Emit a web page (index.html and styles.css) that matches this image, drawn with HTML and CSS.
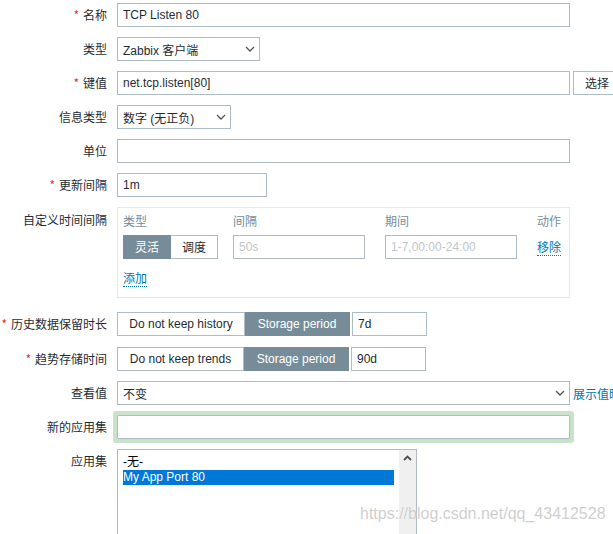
FILE: index.html
```html
<!DOCTYPE html>
<html lang="zh">
<head>
<meta charset="utf-8">
<title>Item</title>
<link rel="stylesheet" href="styles.css">
</head>
<body>
<div class="form">
  <div class="row">
    <div class="lbl"><span class="req">*</span>名称</div>
    <div class="field"><div class="txt w-full">TCP Listen 80</div></div>
  </div>
  <div class="row">
    <div class="lbl">类型</div>
    <div class="field"><div class="sel w-type"><span>Zabbix 客户端</span><svg width="10" height="6" viewBox="0 0 10 6"><polyline points="1,1 5,5 9,1" fill="none" stroke="#555" stroke-width="1.3"/></svg></div></div>
  </div>
  <div class="row">
    <div class="lbl"><span class="req">*</span>键值</div>
    <div class="field"><div class="txt w-full">net.tcp.listen[80]</div><div class="btn">选择</div></div>
  </div>
  <div class="row">
    <div class="lbl">信息类型</div>
    <div class="field"><div class="sel w-info"><span>数字 (无正负)</span><svg width="10" height="6" viewBox="0 0 10 6"><polyline points="1,1 5,5 9,1" fill="none" stroke="#555" stroke-width="1.3"/></svg></div></div>
  </div>
  <div class="row">
    <div class="lbl">单位</div>
    <div class="field"><div class="txt w-full"></div></div>
  </div>
  <div class="row">
    <div class="lbl"><span class="req">*</span>更新间隔</div>
    <div class="field"><div class="txt w-upd">1m</div></div>
  </div>
  <div class="row top row-box">
    <div class="lbl lbl-top">自定义时间间隔</div>
    <div class="field">
      <div class="intervals">
        <div class="hdr">类型</div>
        <div class="hdr">间隔</div>
        <div class="hdr">期间</div>
        <div class="hdr">动作</div>
        <div class="seg seg-small"><span class="on s1">灵活</span><span class="s2">调度</span></div>
        <div class="txt w-int ph">50s</div>
        <div class="txt w-int ph">1-7,00:00-24:00</div>
        <div class="act"><span class="link">移除</span></div>
        <div class="add"><span class="link">添加</span></div>
      </div>
    </div>
  </div>
  <div class="row row-hist">
    <div class="lbl"><span class="req">*</span>历史数据保留时长</div>
    <div class="field">
      <div class="seg"><span class="o1">Do not keep history</span><span class="on o2">Storage period</span></div>
      <div class="txt w-days">7d</div>
    </div>
  </div>
  <div class="row">
    <div class="lbl"><span class="req">*</span>趋势存储时间</div>
    <div class="field">
      <div class="seg"><span class="o1 t">Do not keep trends</span><span class="on o2">Storage period</span></div>
      <div class="txt w-days">90d</div>
    </div>
  </div>
  <div class="row">
    <div class="lbl">查看值</div>
    <div class="field"><div class="sel w-full"><span>不变</span><svg width="10" height="6" viewBox="0 0 10 6"><polyline points="1,1 5,5 9,1" fill="none" stroke="#555" stroke-width="1.3"/></svg></div><span class="link-plain">展示值映射</span></div>
  </div>
  <div class="row">
    <div class="lbl">新的应用集</div>
    <div class="field"><div class="txt w-full focus"></div></div>
  </div>
  <div class="row top">
    <div class="lbl lbl-list">应用集</div>
    <div class="field">
      <div class="listbox">
        <div class="opts">
          <div class="opt">-无-</div>
          <div class="opt sel-opt">My App Port 80</div>
        </div>
        <div class="sbar"><svg width="9" height="6" viewBox="0 0 9 6"><polyline points="1,5 4.5,1.5 8,5" fill="none" stroke="#505050" stroke-width="1.8"/></svg></div>
      </div>
    </div>
  </div>
</div>
<div class="watermark">https://blog.csdn.net/qq_43412528</div>
</body>
</html>
```
FILE: styles.css
```css
html, body {
  margin: 0;
  padding: 0;
  background: #fff;
  width: 613px;
  height: 534px;
  overflow: hidden;
}
body {
  font-family: "Liberation Sans", "Noto Sans CJK SC", sans-serif;
  font-size: 12px;
  color: #1f2c33;
  position: relative;
}
.form {
  padding-top: 3px;
}
.row {
  display: flex;
  align-items: center;
  margin-bottom: 10px;
  white-space: nowrap;
}
.row.top {
  align-items: flex-start;
}
.row-box { margin-bottom: 14px; }
.row-hist { margin-bottom: 11px; }
.lbl {
  width: 107px;
  padding-right: 10px;
  text-align: right;
  flex-shrink: 0;
  font-family: "Noto Sans CJK SC", sans-serif;
  line-height: 16px;
}
.lbl-top { padding-top: 5px; }
.lbl-list { padding-top: 4px; }
.req {
  color: #e0302c;
  margin-right: 4px;
}
.field {
  display: flex;
  align-items: center;
}
.txt {
  box-sizing: border-box;
  height: 24px;
  border: 1px solid #aebcc5;
  background: #fff;
  padding: 0 5px;
  line-height: 22px;
  color: #1f2c33;
}
.w-full { width: 453px; }
.w-upd { width: 150px; }
.w-int { width: 132px; }
.w-days { width: 75px; margin-left: 2px; }
.ph { color: #bfc6ca; }
.focus {
  box-shadow: 0 0 0 4px #c8e4c8;
  border-radius: 1px;
}
.sel {
  box-sizing: border-box;
  height: 24px;
  border: 1px solid #aebcc5;
  padding: 0 4px 0 5px;
  display: flex;
  align-items: center;
  justify-content: space-between;
}
.w-type { width: 143px; }
.w-info { width: 114px; }
.btn {
  box-sizing: border-box;
  height: 24px;
  margin-left: 3px;
  border: 1px solid #aebcc5;
  padding: 0 11px;
  line-height: 22px;
  font-family: "Noto Sans CJK SC", sans-serif;
  flex-shrink: 0;
}
.link-plain {
  color: #0275b8;
  margin-left: 3px;
  font-family: "Noto Sans CJK SC", sans-serif;
}
.intervals {
  box-sizing: border-box;
  width: 453px;
  height: 91px;
  border: 1px solid #e6e9eb;
  padding: 5px 5px 0 5px;
  display: grid;
  grid-template-columns: 110px 152px 152px auto;
  grid-template-rows: 16px 24px auto;
  row-gap: 6px;
  align-items: center;
}
.hdr {
  color: #768d99;
  font-family: "Noto Sans CJK SC", sans-serif;
  line-height: 16px;
}
.act {
  line-height: 16px;
}
.add {
  grid-column: 1 / 5;
  padding-top: 5px;
  align-self: start;
}
.link {
  color: #0275b8;
  font-family: "Noto Sans CJK SC", sans-serif;
  border-bottom: 1px dotted #0275b8;
  line-height: 16px;
}
.seg {
  display: flex;
  height: 24px;
}
.seg span {
  box-sizing: border-box;
  height: 24px;
  border: 1px solid #aebcc5;
  padding: 0 11px;
  line-height: 22px;
  background: #fff;
  color: #1f2c33;
}
.seg span + span { border-left: none; }
.seg span.on {
  background: #768d99;
  border-color: #768d99;
  color: #fff;
}
.seg-small span {
  font-family: "Noto Sans CJK SC", sans-serif;
  text-align: center;
  padding: 0;
}
.seg-small .s1 { width: 48px; }
.seg-small .s2 { width: 47px; }
.o1 { width: 128px; text-align: center; }
.o1.t { width: 127px; }
.o2 { width: 105px; text-align: center; }
.listbox {
  box-sizing: border-box;
  width: 300px;
  height: 100px;
  border: 1px solid #aebcc5;
  display: flex;
}
.opts {
  flex: 1;
  padding: 5px 5px 0 5px;
}
.opt {
  line-height: 15px;
  height: 15px;
  color: #000;
}
.sel-opt {
  background: #0078d7;
  color: #fff;
}
.sbar {
  width: 17px;
  background: #f0f0f0;
  display: flex;
  justify-content: center;
  padding-top: 5px;
  box-sizing: border-box;
}
.sbar svg { display: block; }
.watermark {
  position: absolute;
  left: 360px;
  top: 505px;
  font-size: 16px;
  color: rgba(190, 190, 190, 0.75);
  font-family: "Liberation Sans", sans-serif;
  text-shadow: 0 0 1px rgba(255,255,255,0.8);
}
```
